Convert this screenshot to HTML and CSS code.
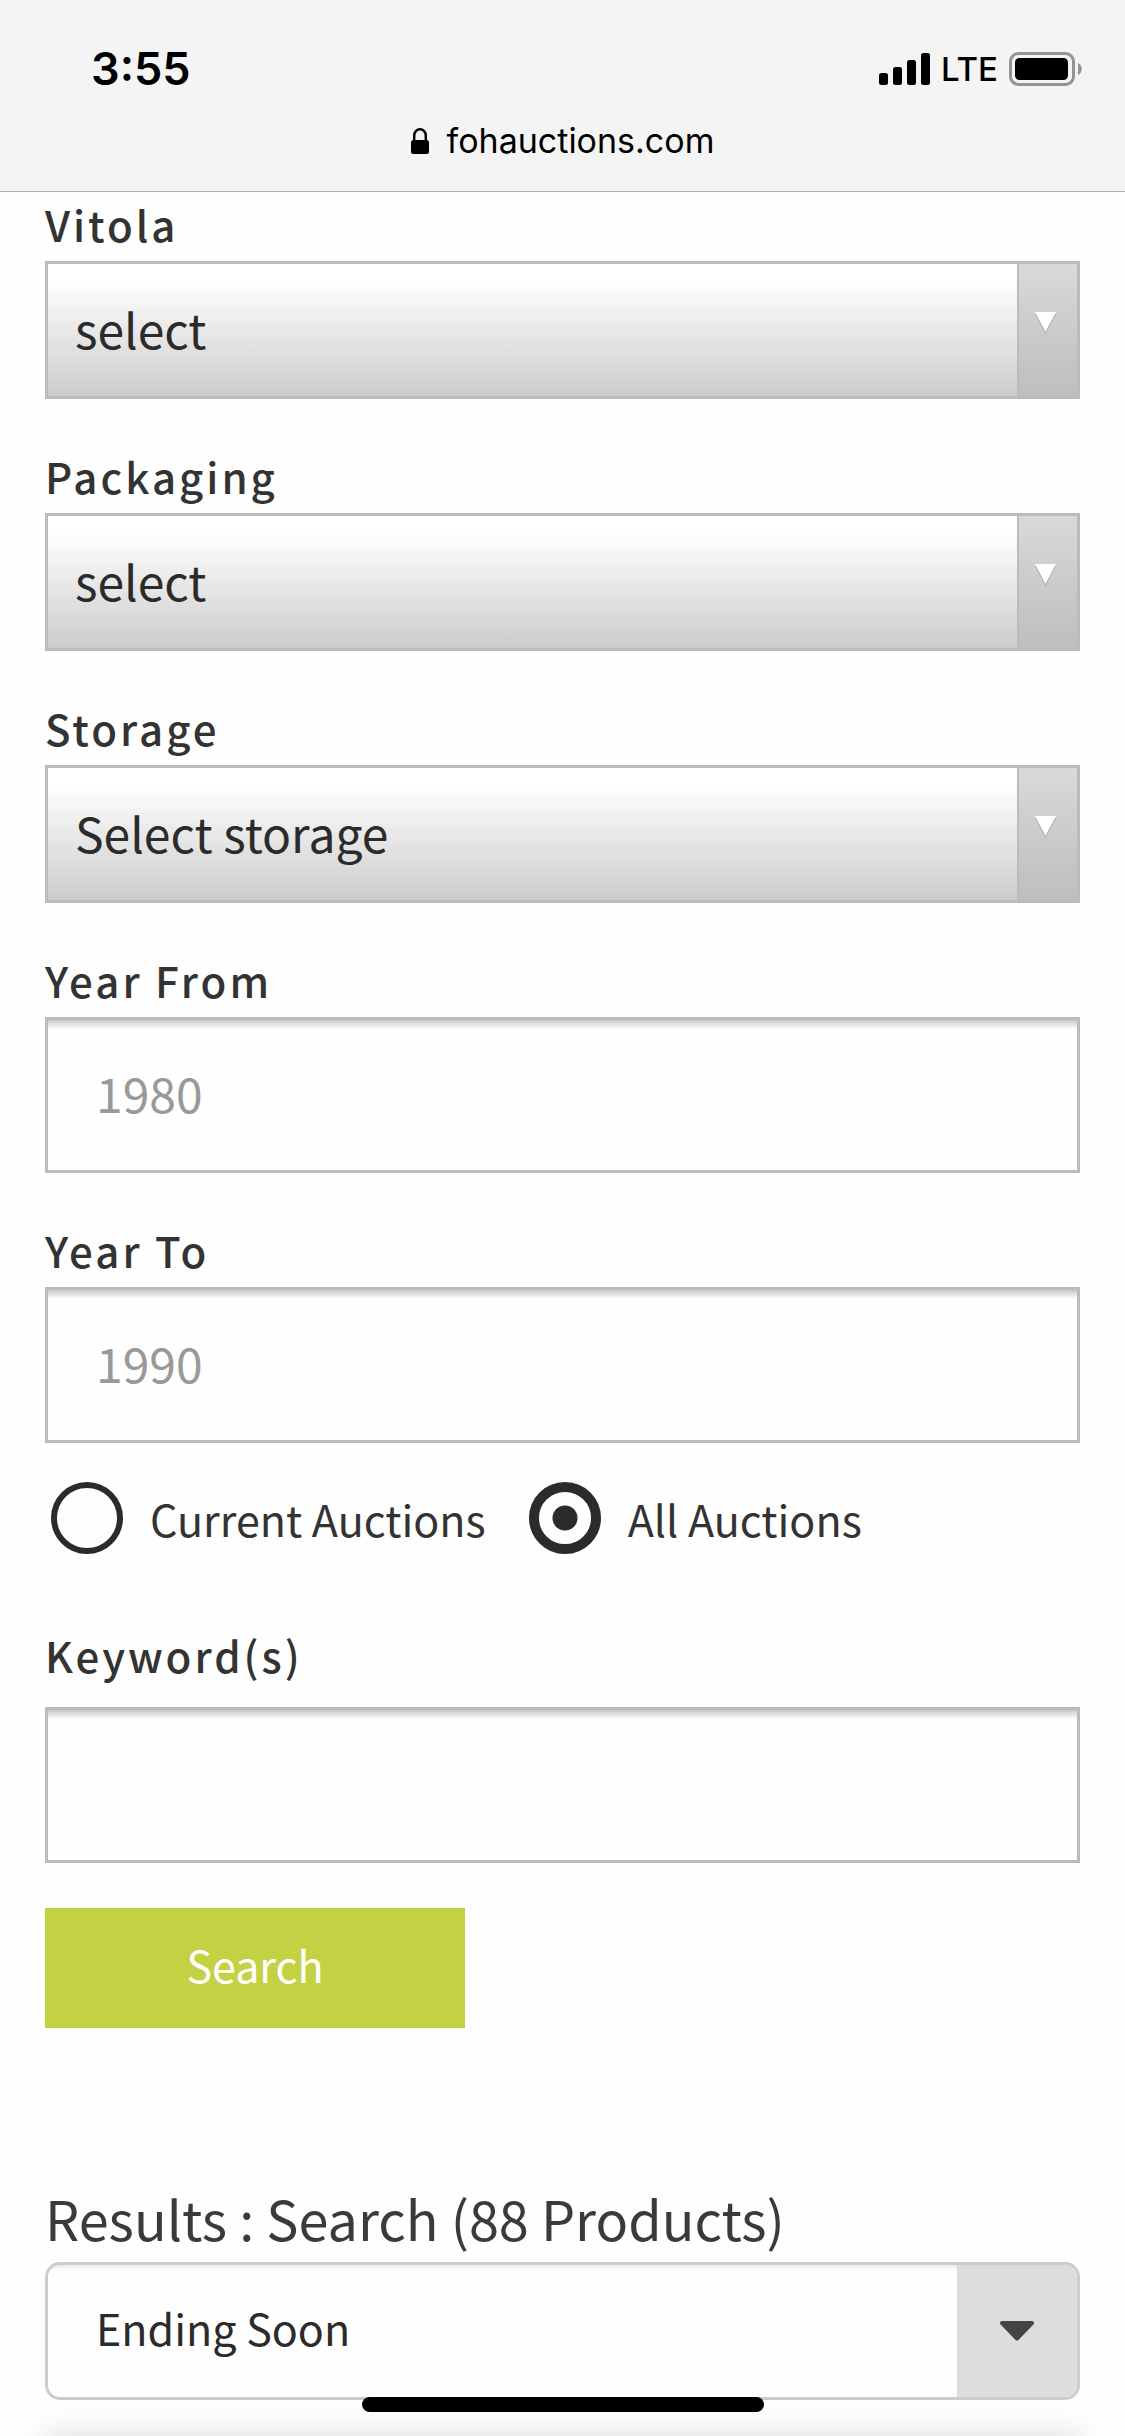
FILE: index.html
```html
<!DOCTYPE html>
<html lang="en">
<head>
<meta charset="utf-8">
<meta name="viewport" content="width=device-width, initial-scale=1">
<title>Search - fohauctions.com</title>
<link rel="stylesheet" href="styles.css">
</head>
<body>
<header class="browser">
  <div class="status">
    <span class="time">3:55</span>
    <div class="indicators">
      <svg class="signal" width="51" height="32" viewBox="0 0 51 32" aria-hidden="true">
        <rect x="0" y="20" width="9" height="12" rx="2.5"/>
        <rect x="14" y="14" width="9" height="18" rx="2.5"/>
        <rect x="28" y="7" width="9" height="25" rx="2.5"/>
        <rect x="42" y="0" width="9" height="32" rx="2.5"/>
      </svg>
      <span class="network">LTE</span>
      <svg class="battery" width="73" height="34" viewBox="0 0 73 34" aria-hidden="true">
        <rect x="1.5" y="1.5" width="63" height="31" rx="8" fill="none" stroke="#949494" stroke-width="3"/>
        <rect x="6" y="6" width="53" height="22" rx="4.5"/>
        <path d="M69 11c5 2 5 10 0 12z" fill="#949494"/>
      </svg>
    </div>
  </div>
  <div class="address">
    <svg width="18" height="26" viewBox="0 0 18 26" aria-hidden="true">
      <rect x="0" y="12" width="18" height="14" rx="2.5"/>
      <path d="M3.2 13V7.500a5.800 6.200 0 0 1 11.600 0V13" fill="none" stroke="#000" stroke-width="2.400"/>
    </svg>
    <span>fohauctions.com</span>
  </div>
</header>

<main class="page">
  <form class="search">
    <div class="field">
      <label for="vitola">Vitola</label>
      <div class="picker">
        <select id="vitola"><option>select</option></select>
        <span class="picker-arrow"><svg width="21" height="22" viewBox="0 0 21 22" aria-hidden="true"><path d="M0 2h21L10.500 22z" fill="#aaa"/><path d="M0 0h21L10.500 20z" fill="#fff"/></svg></span>
      </div>
    </div>
    <div class="field">
      <label for="packaging">Packaging</label>
      <div class="picker">
        <select id="packaging"><option>select</option></select>
        <span class="picker-arrow"><svg width="21" height="22" viewBox="0 0 21 22" aria-hidden="true"><path d="M0 2h21L10.500 22z" fill="#aaa"/><path d="M0 0h21L10.500 20z" fill="#fff"/></svg></span>
      </div>
    </div>
    <div class="field">
      <label for="storage">Storage</label>
      <div class="picker">
        <select id="storage"><option>Select storage</option></select>
        <span class="picker-arrow"><svg width="21" height="22" viewBox="0 0 21 22" aria-hidden="true"><path d="M0 2h21L10.500 22z" fill="#aaa"/><path d="M0 0h21L10.500 20z" fill="#fff"/></svg></span>
      </div>
    </div>
    <div class="field">
      <label for="year-from">Year From</label>
      <input class="text" id="year-from" type="text" placeholder="1980">
    </div>
    <div class="field">
      <label for="year-to">Year To</label>
      <input class="text" id="year-to" type="text" placeholder="1990">
    </div>
    <div class="scope">
      <input type="radio" name="scope" id="current"><label for="current">Current Auctions</label>
      <input type="radio" name="scope" id="all" checked><label for="all">All Auctions</label>
    </div>
    <div class="field keywords">
      <label for="keywords">Keyword(s)</label>
      <input class="text" id="keywords" type="text">
    </div>
    <button class="submit" type="button">Search</button>
  </form>

  <section class="results">
    <h1>Results : Search (88 Products)</h1>
    <div class="sort">
      <select aria-label="Sort results"><option>Ending Soon</option></select>
      <span class="sort-arrow"><svg width="34" height="20" viewBox="0 0 34 20" aria-hidden="true"><path d="M2 2h30L17 17.500z" fill="#444" stroke="#444" stroke-width="4" stroke-linejoin="round"/></svg></span>
    </div>
  </section>
</main>
<div class="next-card"></div>
<div class="home-bar"></div>
</body>
</html>
```
FILE: styles.css
```css
* { box-sizing: border-box; }

body {
  margin: 0;
  position: relative;
  background: #fefefe;
  color: #333;
  font-family: "Noto Sans CJK SC", "Noto Sans", sans-serif;
  font-size: 43px;
}

input, select, button { font: inherit; margin: 0; }

.browser {
  height: 192px;
  background: #f4f4f4;
  border-bottom: 1px solid #b2b2b2;
  color: #000;
  font-family: Inter, "Liberation Sans", sans-serif;
}

.status {
  display: flex;
  justify-content: space-between;
  align-items: center;
  padding: 39px 43px 0 91px;
}

.time { font-size: 45px; line-height: 60px; font-weight: 600; }

.indicators { display: flex; align-items: center; gap: 11px; }

.network { font-size: 33px; line-height: 60px; font-weight: 500; }

.address {
  display: flex;
  justify-content: center;
  align-items: center;
  gap: 18px;
  padding-top: 18px;
  font-size: 34px;
  line-height: 48px;
}

.page { padding: 0 45px; }

.field { display: flex; flex-direction: column; gap: 5px; }
.field + .field { margin-top: 45px; }

.field label {
  font-size: 42px;
  font-weight: 500;
  line-height: 64px;
  letter-spacing: 3px;
}

.picker, .sort { display: grid; grid-template-columns: 1fr auto; }

.picker select, .sort select {
  grid-area: 1 / 1 / 2 / 3;
  appearance: none;
  width: 100%;
  color: #2b2b2b;
  border-radius: 0;
}

.picker select {
  padding: 28px 75px 32px 27px;
  border: 3px solid #bbb;
  background: linear-gradient(#fff 12%, #ccc);
  font-size: 48px;
  line-height: 72px;
}

.picker-arrow {
  grid-area: 1 / 2;
  display: flex;
  justify-content: center;
  width: 60px;
  margin: 3px 3px 3px 0;
  padding: 48px 6px 0 0;
  border-left: 2px solid #bbb;
  background: linear-gradient(#d9d9d9, #bebebe);
  pointer-events: none;
}

.text {
  appearance: none;
  width: 100%;
  padding: 36px 48px 42px;
  border: 3px solid #bbb;
  border-radius: 0;
  background: linear-gradient(#c8c8c8, #fefefe 9px);
  color: #2b2b2b;
  font-size: 48px;
  line-height: 72px;
}

.text::placeholder { color: #999; opacity: 1; }

.scope {
  display: flex;
  align-items: center;
  padding: 39px 6px 69px;
  line-height: 72px;
}

.scope input {
  appearance: none;
  width: 72px;
  height: 72px;
  border: 6px solid #2b2b2b;
  border-radius: 50%;
}

.scope input:checked {
  border-width: 10px;
  background: radial-gradient(circle, #2b2b2b 12px, transparent 13px);
}

.scope label { margin: 0 43px 0 27px; }

.keywords { gap: 20px; }

.submit {
  display: block;
  width: 420px;
  margin-top: 45px;
  padding: 20px 0 28px;
  border: 0;
  background: #c4d143;
  color: #fff;
  line-height: 72px;
}

.results { margin-top: 150px; }

.results h1 {
  margin: 0 0 4px;
  color: #3a3a38;
  font-size: 54px;
  font-weight: 400;
  line-height: 80px;
}

.sort select {
  padding: 26px 168px 34px 48px;
  border: 3px solid #ccc;
  border-radius: 15px;
  background: linear-gradient(#ececec, #fefefe 6px);
  line-height: 72px;
}

.sort-arrow {
  grid-area: 1 / 2;
  display: flex;
  align-items: center;
  justify-content: center;
  width: 120px;
  margin: 3px 3px 3px 0;
  border-radius: 0 12px 12px 0;
  background: #ddd;
  pointer-events: none;
}

.next-card { overflow: hidden; height: 36px; padding: 36px 45px 0; }

.next-card::before {
  content: "";
  display: block;
  height: 60px;
  box-shadow: 0 0 32px rgba(0, 0, 0, 0.14);
}

.home-bar {
  position: absolute;
  bottom: 24px;
  left: 50%;
  width: 402px;
  height: 15px;
  margin-left: -201px;
  border-radius: 8px;
  background: #000;
}
```
